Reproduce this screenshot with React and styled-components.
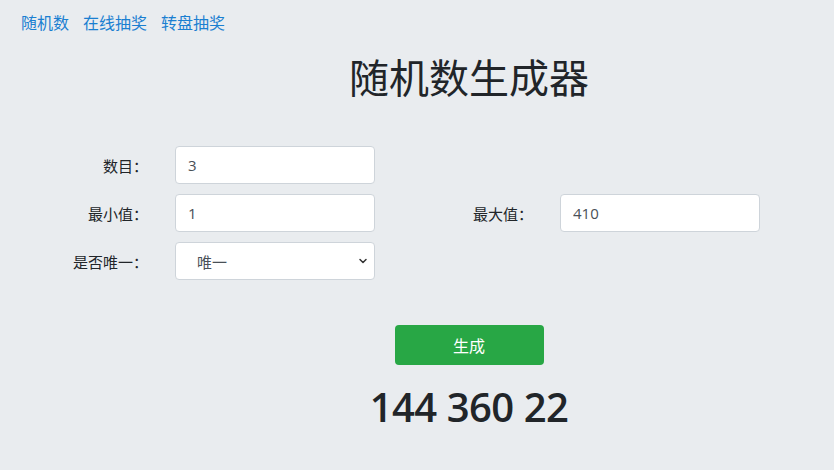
import React, { useState } from 'react'
import styled, { createGlobalStyle } from 'styled-components'
import { ChevronDown } from 'lucide-react'

const GlobalStyle = createGlobalStyle`
  html, body {
    margin: 0;
    padding: 0;
    background: #e9ecef;
    font-family: "Noto Sans CJK SC", "Open Sans", sans-serif;
    color: #212529;
  }
`

const Page = styled.div`
  width: 834px;
  height: 470px;
  overflow: hidden;
`

const Nav = styled.nav`
  display: flex;
  gap: 14px;
  padding: 8px 21px 0;
  height: 28px;
  align-items: center;
`

const NavLink = styled.a`
  font-size: 16px;
  color: #1a7fd1;
  text-decoration: none;
  line-height: 24px;
`

const Main = styled.main`
  padding-left: 104px;
  display: flex;
  flex-direction: column;
  align-items: center;
`

const Title = styled.h1`
  margin: 12px 0 0;
  font-size: 40px;
  font-weight: 400;
  line-height: 56px;
  color: #212529;
`

const Form = styled.div`
  margin-top: 42px;
  display: grid;
  grid-template-columns: 148px 200px 131px 200px;
  column-gap: 27px;
  row-gap: 10px;
  align-items: center;
`

const Label = styled.label`
  font-size: 15px;
  text-align: right;
  color: #212529;
`

const Input = styled.input`
  box-sizing: border-box;
  width: 200px;
  height: 38px;
  padding: 0 12px;
  border: 1px solid #ced4da;
  border-radius: 4px;
  background: #fff;
  font-family: "Open Sans", "Noto Sans CJK SC", sans-serif;
  font-size: 15px;
  color: #495057;
  outline: none;
`

const SelectWrap = styled.div`
  position: relative;
  width: 200px;
  height: 38px;
`

const Select = styled.select`
  appearance: none;
  box-sizing: border-box;
  width: 100%;
  height: 100%;
  padding: 0 30px 0 21px;
  border: 1px solid #ced4da;
  border-radius: 4px;
  background: #fff;
  font-family: "Noto Sans CJK SC", sans-serif;
  font-size: 15px;
  color: #495057;
  outline: none;
`

const Chevron = styled(ChevronDown)`
  position: absolute;
  right: 6px;
  top: 13px;
  pointer-events: none;
  color: #333;
`

const Button = styled.button`
  margin-top: 45px;
  width: 149px;
  height: 40px;
  border: none;
  border-radius: 4px;
  background: #28a745;
  color: #fff;
  font-family: "Noto Sans CJK SC", sans-serif;
  font-size: 16px;
  cursor: pointer;
`

const Result = styled.div`
  margin-top: 14px;
  font-family: "Open Sans", sans-serif;
  font-weight: 600;
  font-size: 40px;
  letter-spacing: -0.5px;
  line-height: 56px;
  color: #212529;
`

export default function App() {
  const [count, setCount] = useState('3')
  const [min, setMin] = useState('1')
  const [max, setMax] = useState('410')
  const [unique, setUnique] = useState('1')

  return (
    <Page>
      <GlobalStyle />
      <Nav>
        <NavLink href="#">随机数</NavLink>
        <NavLink href="#">在线抽奖</NavLink>
        <NavLink href="#">转盘抽奖</NavLink>
      </Nav>
      <Main>
        <Title>随机数生成器</Title>
      </Main>
      <Form>
        <Label>数目：</Label>
        <Input value={count} onChange={e => setCount(e.target.value)} />
        <span />
        <span />
        <Label>最小值：</Label>
        <Input value={min} onChange={e => setMin(e.target.value)} />
        <Label>最大值：</Label>
        <Input value={max} onChange={e => setMax(e.target.value)} />
        <Label>是否唯一：</Label>
        <SelectWrap>
          <Select value={unique} onChange={e => setUnique(e.target.value)}>
            <option value="1">唯一</option>
            <option value="0">不唯一</option>
          </Select>
          <Chevron size={12} strokeWidth={3} />
        </SelectWrap>
      </Form>
      <Main>
        <Button>生成</Button>
        <Result>144 360 22</Result>
      </Main>
    </Page>
  )
}
